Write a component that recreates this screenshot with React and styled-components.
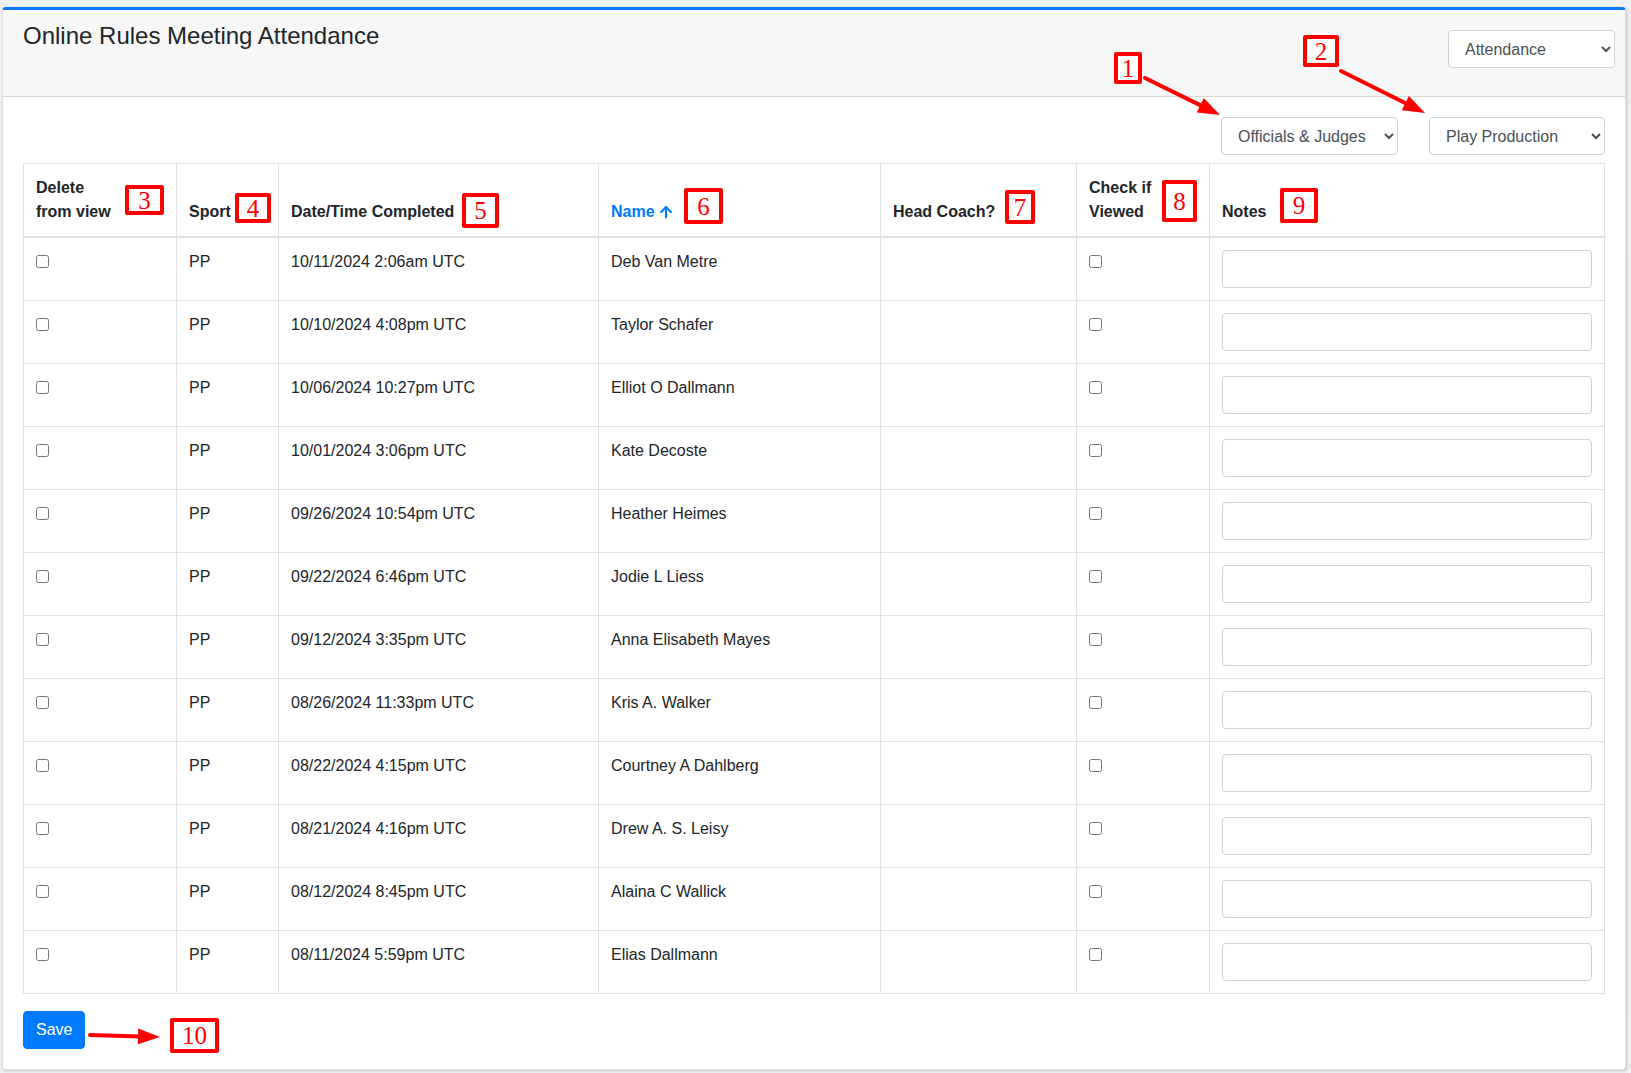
import { FaArrowUp } from 'react-icons/fa';
import styled, { createGlobalStyle } from 'styled-components';

const rows = [
  ['10/11/2024 2:06am UTC', 'Deb Van Metre'],
  ['10/10/2024 4:08pm UTC', 'Taylor Schafer'],
  ['10/06/2024 10:27pm UTC', 'Elliot O Dallmann'],
  ['10/01/2024 3:06pm UTC', 'Kate Decoste'],
  ['09/26/2024 10:54pm UTC', 'Heather Heimes'],
  ['09/22/2024 6:46pm UTC', 'Jodie L Liess'],
  ['09/12/2024 3:35pm UTC', 'Anna Elisabeth Mayes'],
  ['08/26/2024 11:33pm UTC', 'Kris A. Walker'],
  ['08/22/2024 4:15pm UTC', 'Courtney A Dahlberg'],
  ['08/21/2024 4:16pm UTC', 'Drew A. S. Leisy'],
  ['08/12/2024 8:45pm UTC', 'Alaina C Wallick'],
  ['08/11/2024 5:59pm UTC', 'Elias Dallmann'],
];

// callout boxes drawn on top of the screenshot
const markers = [
  { n: 1, x: 1114, y: 52, w: 28, h: 32 },
  { n: 2, x: 1303, y: 35, w: 36, h: 32 },
  { n: 3, x: 125, y: 185, w: 39, h: 30 },
  { n: 4, x: 235, y: 193, w: 36, h: 30 },
  { n: 5, x: 462, y: 193, w: 37, h: 35 },
  { n: 6, x: 684, y: 188, w: 39, h: 36 },
  { n: 7, x: 1005, y: 190, w: 30, h: 34 },
  { n: 8, x: 1162, y: 180, w: 35, h: 42 },
  { n: 9, x: 1280, y: 188, w: 38, h: 35 },
  { n: 10, x: 170, y: 1018, w: 49, h: 35 },
];

const arrows = [
  [1145, 78, 1220, 115],
  [1341, 71, 1425, 113],
  [90, 1035, 160, 1037],
];

const arrowHead = (x1, y1, x2, y2) => {
  const len = Math.hypot(x2 - x1, y2 - y1);
  const ux = (x2 - x1) / len;
  const uy = (y2 - y1) / len;
  const bx = x2 - ux * 22;
  const by = y2 - uy * 22;
  const px = -uy * 8;
  const py = ux * 8;
  return {
    points: `${x2},${y2} ${bx + px},${by + py} ${bx - px},${by - py}`,
    end: [bx + ux * 2, by + uy * 2],
  };
};

const cols = [153, 102, 320, 282, 196, 133, 395];

const App = () => {
  return (
    <Page>
      <GlobalStyle />
      <Card>
        <CardHeader>
          <Title>Online Rules Meeting Attendance</Title>
          <Select $w={167} $top={8} defaultValue="Attendance">
            <option>Attendance</option>
          </Select>
        </CardHeader>
        <CardBody>
          <Filters>
            <Select $w={177} defaultValue="Officials & Judges">
              <option>Officials &amp; Judges</option>
            </Select>
            <Select $w={176} defaultValue="Play Production">
              <option>Play Production</option>
            </Select>
          </Filters>
          <Table>
            <colgroup>
              {cols.map((w, i) => (
                <col key={i} style={{ width: w }} />
              ))}
            </colgroup>
            <thead>
              <tr>
                <Th>
                  Delete
                  <br />
                  from view
                </Th>
                <Th>Sport</Th>
                <Th>Date/Time Completed</Th>
                <Th>
                  <SortLink>
                    Name <FaArrowUp size={14} />
                  </SortLink>
                </Th>
                <Th>Head Coach?</Th>
                <Th>
                  Check if
                  <br />
                  Viewed
                </Th>
                <Th>Notes</Th>
              </tr>
            </thead>
            <tbody>
              {rows.map(([date, name]) => (
                <tr key={name}>
                  <Td>
                    <Check type="checkbox" />
                  </Td>
                  <Td>PP</Td>
                  <Td>{date}</Td>
                  <Td>{name}</Td>
                  <Td />
                  <Td>
                    <Check type="checkbox" />
                  </Td>
                  <Td>
                    <NoteInput type="text" />
                  </Td>
                </tr>
              ))}
            </tbody>
          </Table>
          <SaveBtn>Save</SaveBtn>
        </CardBody>
      </Card>

      {markers.map(m => (
        <Marker key={m.n} style={{ left: m.x, top: m.y, width: m.w, height: m.h }}>
          {m.n}
        </Marker>
      ))}
      <ArrowLayer width="1631" height="1073">
        {arrows.map(([x1, y1, x2, y2], i) => {
          const head = arrowHead(x1, y1, x2, y2);
          return (
            <g key={i}>
              <line
                x1={x1}
                y1={y1}
                x2={head.end[0]}
                y2={head.end[1]}
                stroke="#ff0000"
                strokeWidth="4"
                strokeLinecap="round"
              />
              <polygon points={head.points} fill="#ff0000" />
            </g>
          );
        })}
      </ArrowLayer>
    </Page>
  );
};

export default App;

const GlobalStyle = createGlobalStyle`
  * { box-sizing: border-box; }
  body {
    margin: 0;
    background: #eef0f4;
    font-family: "Liberation Sans", Arial, sans-serif;
    font-size: 16px;
    line-height: 1.5;
    color: #212529;
  }
`;

const Page = styled.div`
  position: relative;
  padding: 7px 5px 0 2px;
  height: 1073px;
  overflow: hidden;
`;

const Card = styled.div`
  background: #fff;
  border: 1px solid rgba(0, 0, 0, 0.125);
  border-top: 3px solid #007bff;
  border-radius: 4px;
  box-shadow: 1px 1px 3px rgba(0, 0, 0, 0.18);
`;

const CardHeader = styled.div`
  display: flex;
  justify-content: space-between;
  align-items: flex-start;
  height: 87px;
  padding: 12px 10px 0 20px;
  background: #f7f7f7;
  border-bottom: 1px solid rgba(0, 0, 0, 0.125);
`;

const Title = styled.h4`
  margin: 0;
  font-size: 24px;
  font-weight: 400;
  line-height: 1.2;
  color: #212529;
`;

const Select = styled.select`
  width: ${p => p.$w}px;
  height: 38px;
  margin-top: ${p => p.$top || 0}px;
  padding: 6px 10px 6px 12px;
  font-family: "Liberation Sans", Arial, sans-serif;
  font-size: 16px;
  color: #495057;
  background: #fff;
  border: 1px solid #ced4da;
  border-radius: 4px;
`;

const CardBody = styled.div`
  padding: 20px;
`;

const Filters = styled.div`
  display: flex;
  justify-content: flex-end;
  gap: 31px;
  margin-bottom: 8px;
`;

const Table = styled.table`
  width: 100%;
  table-layout: fixed;
  border-collapse: collapse;
`;

const Th = styled.th`
  padding: 12px;
  text-align: left;
  vertical-align: bottom;
  font-weight: 700;
  border: 1px solid #dee2e6;
  border-bottom: 2px solid #dee2e6;
`;

const SortLink = styled.span`
  display: inline-flex;
  align-items: center;
  gap: 4px;
  color: #007bff;
`;

const Td = styled.td`
  padding: 12px;
  vertical-align: top;
  border: 1px solid #dee2e6;
`;

const Check = styled.input`
  margin: 5px 0 0 0;
  width: 13px;
  height: 13px;
`;

const NoteInput = styled.input`
  display: block;
  width: 100%;
  height: 38px;
  border: 1px solid #ced4da;
  border-radius: 4px;
  font-size: 16px;
`;

const SaveBtn = styled.button`
  margin-top: 17px;
  padding: 6px 12px;
  font-family: "Liberation Sans", Arial, sans-serif;
  font-size: 16px;
  line-height: 1.5;
  color: #fff;
  background: #007bff;
  border: 1px solid #007bff;
  border-radius: 4px;
`;

const Marker = styled.div`
  position: absolute;
  display: flex;
  align-items: center;
  justify-content: center;
  border: 4px solid #ff0000;
  border-radius: 2px;
  background: #fff;
  color: #ff0000;
  font-family: "Liberation Serif", "Times New Roman", serif;
  font-size: 25px;
  line-height: 1;
`;

const ArrowLayer = styled.svg`
  position: absolute;
  left: 0;
  top: 0;
  pointer-events: none;
`;
